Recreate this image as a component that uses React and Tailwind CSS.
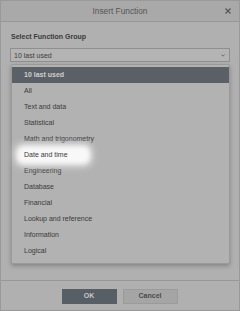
import React from 'react';

const groups = [
    "10 last used",
    "All",
    "Text and data",
    "Statistical",
    "Math and trigonometry",
    "Date and time",
    "Engineering",
    "Database",
    "Financial",
    "Lookup and reference",
    "Information",
    "Logical",
];

const App = () => {
    return (
        <div className="w-[240px] h-[311px] flex flex-col bg-[#b0b0b0] border border-[#999999] text-[#3b3b3b] overflow-hidden" style={{ fontFamily: '"Liberation Sans", Arial, sans-serif' }}>
            {/* Header */}
            <div className="h-[21px] shrink-0 relative flex items-center justify-center bg-[#a9a9a9] border-b border-[#979797]">
                <span className="text-[8.3px] text-[#555555]">Insert Function</span>
                <svg className="absolute right-[8px] top-[7px]" width="6" height="6" viewBox="0 0 6 6">
                    <path d="M0.5 0.5L5.5 5.5M5.5 0.5L0.5 5.5" stroke="#555555" strokeWidth="1.2" />
                </svg>
            </div>

            {/* Body */}
            <div className="flex-1 flex flex-col px-[9px] pt-[10px]">
                <div className="text-[7px] font-bold leading-[9px] text-[#3a3a3a] pl-[1px]">Select Function Group</div>

                <div className="mt-[7px] h-[14px] flex items-center justify-between border border-[#8f8f8f] bg-[#b4b4b4] pl-[3px] pr-[4px]">
                    <span className="text-[7px] leading-none">10 last used</span>
                    <svg width="4" height="3" viewBox="0 0 4 3">
                        <path d="M0.5 0.5L2 2.2L3.5 0.5" stroke="#666666" strokeWidth="0.9" fill="none" />
                    </svg>
                </div>

                <div className="mt-[2px] ml-[1px] pt-[2px] pb-[4px] border border-[#9a9a9a] rounded-[2px] bg-[#b2b2b2] shadow-[0_2px_4px_rgba(0,0,0,0.25)]">
                    {groups.map((g, i) => (
                        <div
                            key={g}
                            className={`h-[16px] flex items-center pl-[12px] text-[7px] text-[#3a3a3a] ${i === 0 ? 'bg-[#5b6067] !text-[#cfcfcf] font-bold' : ''}`}
                        >
                            {i === 5 ? (
                                <span className="relative">
                                    <span className="absolute -left-[7px] -right-[22px] -inset-y-[4px] bg-white/90 rounded-[6px] blur-[2px] shadow-[0_0_6px_2px_rgba(255,255,255,0.7)]" />
                                    <span className="relative">{g}</span>
                                </span>
                            ) : (
                                g
                            )}
                        </div>
                    ))}
                </div>
            </div>

            {/* Footer */}
            <div className="h-[30px] shrink-0 border-t border-[#979797] flex items-start justify-center gap-[6px] pt-[8px] pr-[1px]">
                <button className="w-[55px] h-[15px] bg-[#585e65] text-[#c8c8c8] text-[7px] font-bold">OK</button>
                <button className="w-[55px] h-[15px] bg-[#a5a5a5] border border-[#9b9b9b] text-[#4a4a4a] text-[7px] font-bold">Cancel</button>
            </div>
        </div>
    );
};

export default App;
